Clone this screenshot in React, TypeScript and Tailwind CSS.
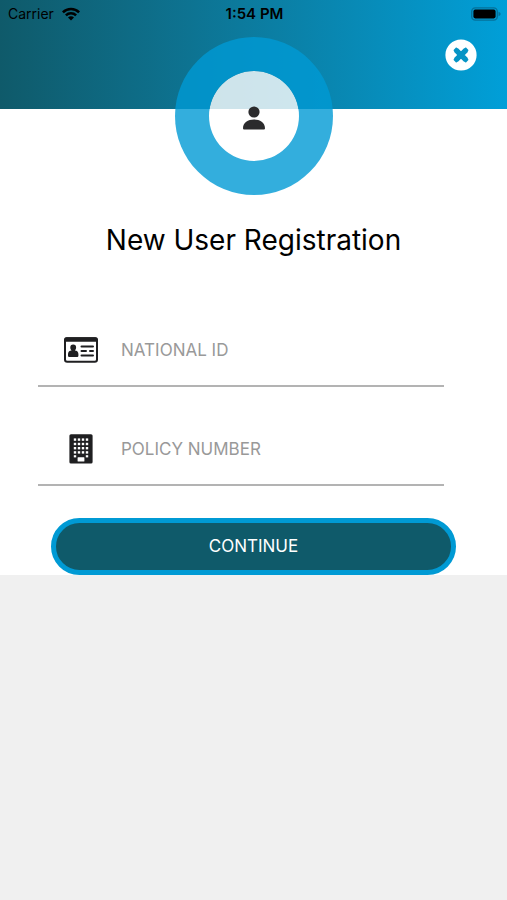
import { FormEvent, ReactNode, useState } from "react";

function WifiIcon() {
  return (
    <svg viewBox="0 0 18 14" className="h-3.5 w-[18px]" fill="black" aria-hidden="true">
      <path d="M0 4.4a12.8 12.8 0 0 1 18 0l-1.8 1.9a10.2 10.2 0 0 0-14.4 0z" />
      <path d="M3 7.4a8.5 8.5 0 0 1 12 0l-1.8 1.9a5.9 5.9 0 0 0-8.4 0z" />
      <path d="M6 10.5a4.2 4.2 0 0 1 6 0L9 13.6z" />
    </svg>
  );
}

function BatteryIcon() {
  return (
    <svg viewBox="0 0 30 14" className="h-3.5 w-[30px]" aria-hidden="true">
      <rect x="0.7" y="0.9" width="25.6" height="12.2" rx="3.6" fill="none" stroke="#05719a" strokeWidth="1.4" />
      <rect x="2.4" y="2.6" width="22.2" height="8.8" rx="1.8" fill="black" />
      <path d="M27.5 4.8q2.2 .8 2.2 2.2t-2.2 2.2z" fill="#05719a" />
    </svg>
  );
}

function CloseIcon() {
  return (
    <svg viewBox="0 0 32 32" className="size-8" aria-hidden="true">
      <circle cx="16" cy="16" r="15.6" fill="white" />
      <path d="M11.2 11.2l9.6 9.6M20.8 11.2L11.2 20.8" stroke="#0694c5" strokeWidth="4" strokeLinecap="square" />
      <path d="M10.8 10.8l10.4 10.4M21.2 10.8L10.8 21.2" stroke="#0694c5" strokeWidth="5.4" />
    </svg>
  );
}

function PersonIcon() {
  return (
    <svg viewBox="0 0 24 24" className="size-6" fill="#2b2b2d" aria-hidden="true">
      <circle cx="12" cy="6" r="5.6" />
      <path d="M1 22.2C1 16.6 6 13.4 12 13.4s11 3.2 11 8.8c0 .8-.6 1.4-1.4 1.4H2.4c-.8 0-1.4-.6-1.4-1.4z" />
    </svg>
  );
}

function IdCardIcon() {
  return (
    <svg viewBox="0 0 36 28" className="h-7 w-9" aria-hidden="true">
      <rect x="2" y="2.2" width="32" height="23.6" rx="2.2" fill="white" stroke="#1f1f21" strokeWidth="2" />
      <path d="M1.2 5.8V3.4Q1.2 1.2 3.4 1.2h29.2q2.2 0 2.2 2.2v2.4z" fill="#1f1f21" />
      <path
        d="M10.2 8.6a2.9 2.9 0 0 1 2.9 3c0 1.3-.6 2.3-1.3 2.9q3.6 .4 3.6 3.6v1.6q0 1.2-1.2 1.2H6.2Q5 20.9 5 19.7v-1.6q0-3.2 3.6-3.6c-.7-.6-1.3-1.6-1.3-2.9a2.9 2.9 0 0 1 2.9-3z"
        fill="#1f1f21"
      />
      <path
        d="M18.5 10.6H30M18.5 15H23M27 15H30M18.5 19.4H30"
        fill="none"
        stroke="#1f1f21"
        strokeWidth="2"
        strokeLinecap="round"
      />
    </svg>
  );
}

function BuildingIcon() {
  const columns = [5, 9, 13, 17];
  const rows = [4.4, 8.8, 13, 17.2];

  return (
    <svg viewBox="0 0 24 30" className="h-[30px] w-6" aria-hidden="true">
      <rect x="0.4" y="0.2" width="23.2" height="29.4" rx="1.6" fill="#1f1f21" />
      <g fill="white">
        {rows.map((y) => columns.map((x) => <rect key={`${x}-${y}`} x={x - 0.2} y={y} width="2.4" height="2.4" />))}
        <rect x="4.8" y="21.2" width="2.4" height="2.2" />
        <rect x="16.8" y="21.2" width="2.4" height="2.2" />
        <rect x="8.6" y="23.2" width="6.8" height="4.2" rx="0.5" />
      </g>
    </svg>
  );
}

type FieldProps = {
  id: string;
  label: string;
  icon: ReactNode;
  value: string;
  onChange: (value: string) => void;
};

function Field({ id, label, icon, value, onChange }: FieldProps) {
  return (
    <div className="ml-[38px] flex h-[72px] w-4/5 items-center border-b-2 border-[#b3b3b3]">
      <label htmlFor={id} aria-label={label} className="flex w-[83px] shrink-0 justify-center pl-0.5">
        {icon}
      </label>
      <input
        id={id}
        value={value}
        onChange={(event) => onChange(event.target.value)}
        placeholder={label}
        aria-label={label}
        className="h-full min-w-0 flex-1 bg-transparent text-[17px] text-black outline-none placeholder:text-[#999999]"
      />
    </div>
  );
}

export default function App() {
  const [nationalId, setNationalId] = useState("");
  const [policyNumber, setPolicyNumber] = useState("");

  function submit(event: FormEvent<HTMLFormElement>) {
    event.preventDefault();
  }

  return (
    <div className="min-h-dvh bg-[#f0f0f0] font-[Inter,sans-serif] text-black">
      <main className="bg-white">
        <header className="h-[109px] bg-linear-to-r from-[#0f5a6a] to-[#009fd8]">
          <div className="grid h-7 grid-cols-3 items-center pr-1.5 pl-2 text-sm">
            <div className="flex items-center gap-2">
              <span>Carrier</span>
              <WifiIcon />
            </div>
            <span className="text-center text-[15px] font-semibold">1:54 PM</span>
            <div className="flex justify-end">
              <BatteryIcon />
            </div>
          </div>
          <div className="flex justify-end pt-[11px] pr-[30px]">
            <button type="button" aria-label="Close">
              <CloseIcon />
            </button>
          </div>
        </header>

        <div className="relative mx-auto -mt-[72px] flex size-[158px] items-center justify-center rounded-full border-[34px] border-[#009ad4]/80 bg-white/80 bg-clip-padding pt-1">
          <PersonIcon />
        </div>

        <h1 className="mt-[27px] text-center text-[28px] leading-9">New User Registration</h1>

        <form onSubmit={submit} className="mt-[57px]">
          <div className="space-y-[27px]">
            <Field id="national-id" label="NATIONAL ID" icon={<IdCardIcon />} value={nationalId} onChange={setNationalId} />
            <Field id="policy-number" label="POLICY NUMBER" icon={<BuildingIcon />} value={policyNumber} onChange={setPolicyNumber} />
          </div>
          <button type="submit" className="mx-auto mt-8 block h-[57px] w-4/5 rounded-full border-5 border-[#009ad4] bg-[#0f5a6a] text-[17px] text-white">
            CONTINUE
          </button>
        </form>
      </main>
    </div>
  );
}
